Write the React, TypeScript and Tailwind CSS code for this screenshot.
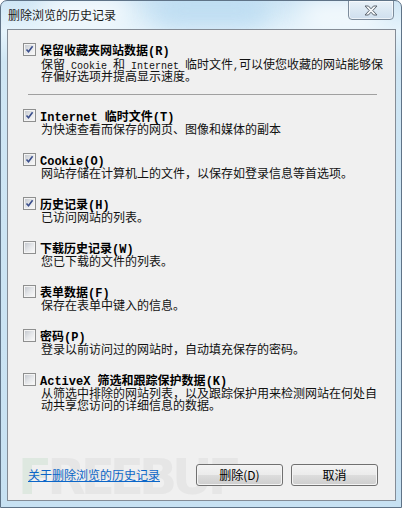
import React from 'react'

const CJK = "font-['Noto_Sans_CJK_SC',sans-serif]"

function Mixed({ text, ascii }: { text: string; ascii: string }) {
  const parts = text.split(/([\x20-\x7e]+)/)
  return (
    <>
      {parts.map((p, i) =>
        i % 2 ? (
          <span key={i} className={ascii}>
            {p}
          </span>
        ) : (
          p
        )
      )}
    </>
  )
}

// ascii runs in a monospace face, like the dialog's bitmap font
const descAscii = "font-['Liberation_Mono',monospace] text-[10px] leading-[0px]"
const titleAscii = "font-['Liberation_Mono',monospace] font-bold text-[12px] leading-[0px]"

function CheckBox({ checked }: { checked: boolean }) {
  return (
    <div className="w-[13px] h-[13px] shrink-0 border border-[#8e8f8f] bg-[#f4f4f4] p-[1px]">
      <div className="relative w-full h-full bg-gradient-to-br from-[#c6cad0] via-[#e4e6e9] to-[#f8f8f8]">
        {checked && (
          <svg className="absolute left-0 top-0" width="9" height="9" viewBox="0 0 9 9">
            <path d="M1.5 4.5 L3.5 6.8 L7.6 1.2" fill="none" stroke="#3b4f8c" strokeWidth="1.6" />
          </svg>
        )}
      </div>
    </div>
  )
}

type Item = { title: string; desc: string[]; checked: boolean }

const items: Item[] = [
  { title: 'Internet 临时文件(T)', desc: ['为快速查看而保存的网页、图像和媒体的副本'], checked: true },
  { title: 'Cookie(O)', desc: ['网站存储在计算机上的文件，以保存如登录信息等首选项。'], checked: true },
  { title: '历史记录(H)', desc: ['已访问网站的列表。'], checked: true },
  { title: '下载历史记录(W)', desc: ['您已下载的文件的列表。'], checked: false },
  { title: '表单数据(F)', desc: ['保存在表单中键入的信息。'], checked: false },
  { title: '密码(P)', desc: ['登录以前访问过的网站时，自动填充保存的密码。'], checked: false },
  {
    title: 'ActiveX 筛选和跟踪保护数据(K)',
    desc: ['从筛选中排除的网站列表，以及跟踪保护用来检测网站在何处自', '动共享您访问的详细信息的数据。'],
    checked: false,
  },
]

function Title({ text }: { text: string }) {
  return (
    <span className={`ml-[4px] h-[13px] text-[12px] leading-[13px] font-bold text-black whitespace-pre ${CJK}`}>
      <Mixed text={text} ascii={titleAscii} />
    </span>
  )
}

function Desc({ lines }: { lines: string[] }) {
  return (
    <div className={`pl-[18px] text-[12px] leading-[12px] text-[#111] ${CJK}`}>
      {lines.map((d, i) => (
        <div key={i} className="h-[12px] whitespace-pre">
          <Mixed text={d} ascii={descAscii} />
        </div>
      ))}
    </div>
  )
}

function Row({ item }: { item: Item }) {
  return (
    <div className="flex flex-col gap-[1px]">
      <div className="flex items-center h-[13px]">
        <CheckBox checked={item.checked} />
        <Title text={item.title} />
      </div>
      <Desc lines={item.desc} />
    </div>
  )
}

function WinButton({ label }: { label: string }) {
  return (
    <div className="w-[87px] h-[22px] rounded-[3px] border border-[#707070] p-[1px] bg-[#f4f4f4]">
      <div
        className={`w-full h-full rounded-[2px] flex items-center justify-center text-[12px] text-black bg-[linear-gradient(#f2f2f2,#ebebeb_50%,#dddddd_50%,#cfcfcf)] ${CJK}`}
      >
        {label}
      </div>
    </div>
  )
}

export default function App() {
  return (
    <div className="relative w-[402px] h-[508px] overflow-hidden rounded-t-[7px] border border-[#5f7387] bg-[linear-gradient(180deg,#cfe6f5_0%,#e6f4fc_6%,#cfe6f4_12%,#c7e1f2_100%)]">
      {/* glass blobs */}
      <div className="absolute left-[150px] top-[-10px] w-[120px] h-[40px] rounded-full bg-[#b5d8f0] blur-md opacity-70" />
      <div className="absolute left-[40px] top-[-6px] w-[90px] h-[30px] rounded-full bg-white blur-md opacity-80" />
      <div className="absolute left-[300px] top-[0px] w-[80px] h-[26px] rounded-full bg-white blur-md opacity-80" />

      {/* title bar */}
      <div className="relative h-[28px] flex items-start">
        <span className={`pl-[7px] pt-[7px] text-[12px] leading-[14px] text-[#1a1a1a] ${CJK}`}>删除浏览的历史记录</span>
        <div className="absolute right-[7px] top-[-1px] w-[46px] h-[20px] rounded-b-[4px] border border-[#7d8c9c] bg-[linear-gradient(#e9f1f8,#dbe8f3_50%,#cfdfee)] flex items-center justify-center shadow-[inset_0_0_0_1px_rgba(255,255,255,0.6)]">
          <svg width="14" height="11" viewBox="0 0 14 11">
            <path
              d="M1 1 H4.5 L7 3.8 L9.5 1 H13 L8.8 5.5 L13 10 H9.5 L7 7.2 L4.5 10 H1 L5.2 5.5 Z"
              fill="#f4f6f8"
              stroke="#5d6670"
              strokeWidth="1"
              strokeLinejoin="round"
            />
          </svg>
        </div>
      </div>

      {/* client area */}
      <div className="relative ml-[6px] w-[389px] h-[472px] border border-[#848c96] bg-[#f0f0f0] overflow-hidden flex flex-col">
        {/* watermark */}
        <div className="absolute left-[10px] top-[422px] font-['DejaVu_Sans',sans-serif] font-bold text-[50px] leading-[50px] tracking-[-5px] text-[#e6e6e6] select-none">
          <span className="text-[#dee8e0]">F</span>REEBUF
        </div>

        <div className="relative flex flex-col pl-[15px] pt-[13px]">
          <div className="flex flex-col gap-[2px]">
            <div className="flex items-center h-[13px]">
              <CheckBox checked />
              <Title text="保留收藏夹网站数据(R)" />
            </div>
            <Desc lines={['保留 Cookie 和 Internet 临时文件,可以使您收藏的网站能够保', '存偏好选项并提高显示速度。']} />
          </div>

          <div className="mt-[12px] ml-[5px] w-[349px] h-[1px] bg-[#a0a0a0]" />

          <div className="mt-[14px] flex flex-col gap-[18px]">
            {items.map((it) => (
              <Row key={it.title} item={it} />
            ))}
          </div>
        </div>

        {/* footer */}
        <div className="relative mt-auto flex items-center pl-[20px] pr-[17px] pb-[14px]">
          <span className={`text-[12px] leading-[14px] text-[#0b66c8] underline ${CJK}`}>关于删除浏览的历史记录</span>
          <div className="ml-auto flex gap-[8px]">
            <WinButton label="删除(D)" />
            <WinButton label="取消" />
          </div>
        </div>
      </div>
    </div>
  )
}
